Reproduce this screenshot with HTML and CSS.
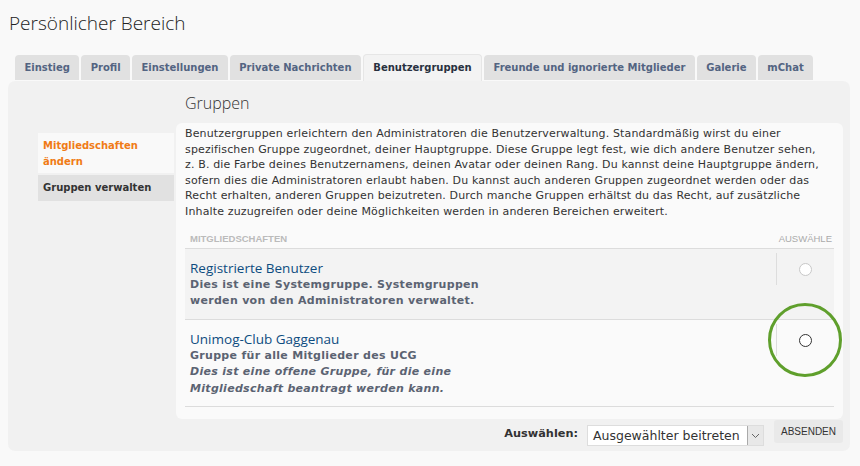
FILE: index.html
```html
<!DOCTYPE html>
<html lang="de">
<head>
  <meta charset="UTF-8" />
  <title>Persönlicher Bereich</title>
  <link rel="stylesheet" href="styles.css">
</head>
<body>
  <div class="page">
    <h1 class="page-title">Persönlicher Bereich</h1>

    <ul class="tabs">
      <li><a href="#">Einstieg</a></li>
      <li><a href="#">Profil</a></li>
      <li><a href="#">Einstellungen</a></li>
      <li><a href="#">Private Nachrichten</a></li>
      <li class="active"><a href="#">Benutzergruppen</a></li>
      <li><a href="#">Freunde und ignorierte Mitglieder</a></li>
      <li><a href="#">Galerie</a></li>
      <li><a href="#">mChat</a></li>
    </ul>

    <div class="panel">
      <ul class="side-nav">
        <li class="current"><a href="#">Mitgliedschaften ändern</a></li>
        <li><a href="#">Gruppen verwalten</a></li>
      </ul>

      <div class="content">
        <h2>Gruppen</h2>
        <div class="box">
          <p class="intro">Benutzergruppen erleichtern den Administratoren die Benutzerverwaltung. Standardmäßig wirst du einer<br>
            spezifischen Gruppe zugeordnet, deiner Hauptgruppe. Diese Gruppe legt fest, wie dich andere Benutzer sehen,<br>
            z. B. die Farbe deines Benutzernamens, deinen Avatar oder deinen Rang. Du kannst deine Hauptgruppe ändern,<br>
            sofern dies die Administratoren erlaubt haben. Du kannst auch anderen Gruppen zugeordnet werden oder das<br>
            Recht erhalten, anderen Gruppen beizutreten. Durch manche Gruppen erhältst du das Recht, auf zusätzliche<br>
            Inhalte zuzugreifen oder deine Möglichkeiten werden in anderen Bereichen erweitert.</p>

          <div class="table-head">
            <span>Mitgliedschaften</span>
            <span>Auswähle</span>
          </div>

          <div class="group-row row-dark">
            <div class="group-info">
              <a class="group-name" href="#">Registrierte Benutzer</a>
              <p class="group-desc">Dies ist eine Systemgruppe. Systemgruppen<br>werden von den Administratoren verwaltet.</p>
            </div>
            <div class="group-select">
              <span class="radio"></span>
            </div>
          </div>

          <div class="group-row">
            <div class="group-info">
              <a class="group-name" href="#">Unimog-Club Gaggenau</a>
              <p class="group-desc">Gruppe für alle Mitglieder des UCG</p>
              <p class="group-desc note">Dies ist eine offene Gruppe, für die eine<br>Mitgliedschaft beantragt werden kann.</p>
            </div>
            <div class="group-select">
              <span class="radio active"></span>
              <span class="marker"></span>
            </div>
          </div>
        </div>

        <div class="actions">
          <label>Auswählen:</label>
          <div class="select-box">
            <span>Ausgewählter beitreten</span>
            <span class="select-arrow">
              <svg width="9" height="6" viewBox="0 0 9 6"><path d="M1 1l3.5 3.5L8 1" fill="none" stroke="#666" stroke-width="1"/></svg>
            </span>
          </div>
          <button type="button">Absenden</button>
        </div>
      </div>
    </div>
  </div>
</body>
</html>
```

FILE: styles.css
```css
* {
  box-sizing: border-box;
  margin: 0;
  padding: 0;
}

body {
  background: #f9f9f9;
  font-family: "DejaVu Sans", Verdana, sans-serif;
  font-size: 11px;
  color: #333;
}

a {
  text-decoration: none;
}

ul {
  list-style: none;
}

.page {
  padding: 11px 10px 0 8px;
}

.page-title {
  font-family: "Open Sans", sans-serif;
  font-weight: 300;
  font-size: 19px;
  line-height: 24px;
  color: #222;
  padding-left: 1px;
}

/* Reiter oben */
.tabs {
  display: flex;
  gap: 2px;
  margin: 20px 0 0 7px;
}

.tabs li {
  flex-shrink: 0;
  background: #e1e1e1;
  border-radius: 4px 4px 0 0;
  height: 25px;
}

.tabs a {
  display: block;
  padding: 0 9.4px;
  line-height: 25px;
  font-size: 10px;
  font-weight: bold;
  white-space: nowrap;
  color: #536482;
}

.tabs li.active {
  background: #f3f3f3;
  margin-top: -1px;
  height: 27px;
  border: 1px solid #e6e6e6;
  border-bottom: none;
}

.tabs li.active a {
  color: #28313f;
  line-height: 26px;
}

/* Hauptbereich */
.panel {
  display: flex;
  background: #f1f1f1;
  border-radius: 7px;
  height: 370px;
  padding: 11px 7px 0 30px;
}

.side-nav {
  width: 136px;
  margin-top: 41px;
  margin-right: 2px;
}

.side-nav li {
  background: #e1e1e1;
}

.side-nav li.current {
  background: #f9f9f9;
  margin-bottom: 2px;
}

.side-nav a {
  display: block;
  padding: 5px;
  line-height: 16px;
  font-size: 10px;
  font-weight: bold;
  color: #333;
}

.side-nav li.current a {
  color: #f07b16;
  padding: 5px 30px 3px 5px;
}

.content {
  flex: 1;
}

.content h2 {
  font-family: "Open Sans", sans-serif;
  font-weight: 300;
  font-size: 16px;
  line-height: 22px;
  color: #333;
  padding-left: 9px;
  margin-bottom: 9px;
}

.box {
  background: #fafafa;
  border-radius: 6px;
  height: 296px;
  padding: 3px 9px 0 9px;
}

.intro {
  line-height: 15.6px;
  letter-spacing: 0.15px;
  white-space: nowrap;
  color: #333;
}

.table-head {
  display: flex;
  justify-content: space-between;
  margin-top: 13px;
  padding: 0 2px 4px 5px;
  border-bottom: 1px solid #dcdcdc;
  font-family: "Liberation Sans", Arial, sans-serif;
  font-size: 9.5px;
  text-transform: uppercase;
  color: #aaa;
}

.table-head span:first-child {
  font-weight: bold;
  color: #bbb;
}

.group-row {
  display: flex;
  border-bottom: 1px solid #dcdcdc;
  padding: 10px 0 9px 5px;
}

.row-dark {
  background: #f3f3f3;
}

.group-info {
  flex: 1;
}

.group-name {
  display: block;
  font-family: "Open Sans", sans-serif;
  font-size: 13.5px;
  color: #0d4c80;
  line-height: 18px;
}

.group-desc {
  font-weight: bold;
  letter-spacing: 0.3px;
  color: #5b6372;
  line-height: 16.5px;
}

.group-desc.note {
  font-style: italic;
}

.group-select {
  position: relative;
  width: 58px;
  border-left: 1px solid #ddd;
  height: 32px;
  margin-top: -6px;
  display: flex;
  justify-content: center;
  padding-top: 10px;
}

.radio {
  width: 13px;
  height: 13px;
  border-radius: 50%;
  border: 1px solid #c8c8c8;
  background: #fff;
}

.radio.active {
  border-color: #333;
}

/* grüne Markierung */
.marker {
  position: absolute;
  left: -9px;
  top: -21px;
  width: 74px;
  height: 74px;
  border: 3px solid #5f9f2c;
  border-radius: 50%;
}

.actions {
  display: flex;
  justify-content: flex-end;
  align-items: center;
  margin-top: 2px;
}

.actions label {
  font-weight: bold;
  font-size: 11.3px;
  color: #333;
  margin-right: 9px;
}

.select-box {
  display: flex;
  align-items: center;
  justify-content: space-between;
  width: 177px;
  height: 21px;
  background: #fff;
  border: 1px solid #ddd;
  padding-left: 5px;
  font-size: 12.5px;
  margin-top: 4px;
}

.select-arrow {
  display: flex;
  align-items: center;
  justify-content: center;
  width: 16px;
  height: 19px;
  border-left: 1px solid #aaa;
  background: #e8e8e8;
}

button {
  margin-left: 10px;
  padding: 0 7px;
  height: 23px;
  background: #e9e9e9;
  border: none;
  border-radius: 3px;
  font-family: "Liberation Sans", Arial, sans-serif;
  font-size: 10px;
  text-transform: uppercase;
  color: #333;
  margin-top: -4px;
}
```
